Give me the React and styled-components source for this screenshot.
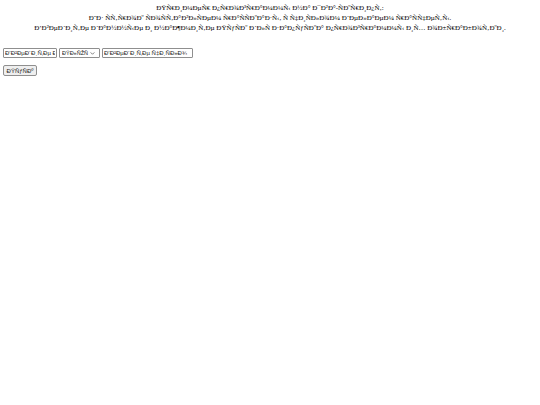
import styled, { createGlobalStyle } from "styled-components";

const cp1252 = {
    0x80: "€", 0x82: "‚", 0x83: "ƒ", 0x84: "„", 0x85: "…", 0x86: "†", 0x87: "‡",
    0x88: "ˆ", 0x89: "‰", 0x8a: "Š", 0x8b: "‹", 0x8c: "Œ", 0x8e: "Ž",
    0x91: "‘", 0x92: "’", 0x93: "“", 0x94: "”", 0x95: "•", 0x96: "–", 0x97: "—",
    0x98: "˜", 0x99: "™", 0x9a: "š", 0x9b: "›", 0x9c: "œ", 0x9e: "ž", 0x9f: "Ÿ",
};

// undefined bytes (0x81, 0x8d, 0x8f, 0x90, 0x9d) show as nothing
const garble = (text) =>
    Array.from(new TextEncoder().encode(text))
        .map((b) => {
            if (b < 0x80 || b > 0x9f) return String.fromCharCode(b);
            return cp1252[b] || "";
        })
        .join("");

const arrow =
    "data:image/svg+xml;utf8," +
    encodeURIComponent(
        '<svg xmlns="http://www.w3.org/2000/svg" width="6" height="4" viewBox="0 0 6 4"><path d="M0.5 0.5 L3 3 L5.5 0.5" fill="none" stroke="#333" stroke-width="0.8"/></svg>'
    );

const GlobalStyle = createGlobalStyle`
    body {
        margin: 3px;
        background: #ffffff;
        font-family: "Liberation Serif", "Times New Roman", serif;
        color: #000000;
    }
`;

const Intro = styled.div`
    text-align: center;
    font-size: 7px;
    line-height: 10px;
`;

const Form = styled.div`
    display: flex;
    align-items: center;
    gap: 2px;
    margin-top: 15px;
`;

const Field = styled.input`
    box-sizing: border-box;
    width: ${(p) => p.$width}px;
    height: 10px;
    padding: 0 1px;
    font-family: "Liberation Sans", Arial, sans-serif;
    font-size: 6px;
    border: 1px solid #8f8f8f;
    border-radius: 1px;
    color: #222;
    outline: none;
`;

const Select = styled.select`
    box-sizing: border-box;
    appearance: none;
    width: 41px;
    height: 10px;
    padding: 0 9px 0 2px;
    font-family: "Liberation Sans", Arial, sans-serif;
    font-size: 5.5px;
    border: 1px solid #8f8f8f;
    border-radius: 1px;
    background: #fff url("${arrow}") no-repeat right 4px center / 5px 3px;
    color: #222;
`;

const Button = styled.button`
    display: block;
    box-sizing: border-box;
    margin-top: 7px;
    width: 34px;
    height: 11px;
    padding: 0;
    font-family: "Liberation Sans", Arial, sans-serif;
    font-size: 6px;
    border: 1px solid #8f8f8f;
    border-radius: 2px;
    background: #efefef;
    color: #222;
`;

function App() {
    return (
        <>
            <GlobalStyle />
            <Intro>
                <div>{garble("Пример программы на Ява-скрипт:")}</div>
                <div>{garble("Из строк составляем рассказы, с числом делаем расчеты.")}</div>
                <div>{garble("Введите данные и нажмите Пуск для запуска программы их обработки.")}</div>
            </Intro>
            <Form>
                <Field $width={54} defaultValue={garble("Введите имя")} />
                <Select defaultValue="plus">
                    <option value="plus">{garble("Плюс")}</option>
                    <option value="minus">{garble("Минус")}</option>
                </Select>
                <Field $width={91} defaultValue={garble("Введите число")} />
            </Form>
            <Button>{garble("Пуск")}</Button>
        </>
    );
}

export default App;
